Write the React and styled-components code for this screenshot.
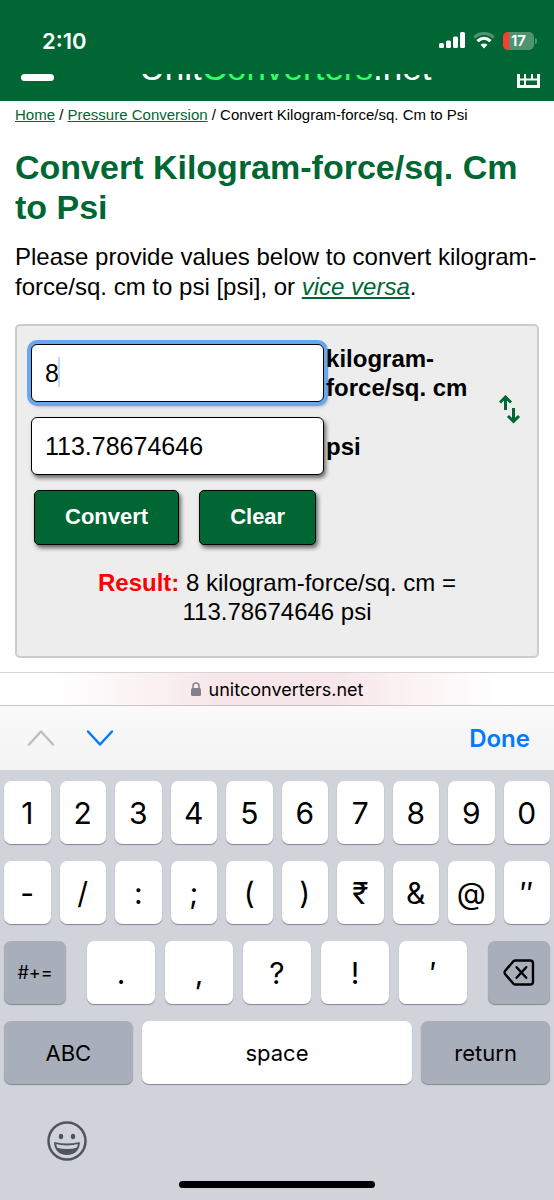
import React, { useState } from 'react';
import styled, { createGlobalStyle } from 'styled-components';

const NUMBER_KEYS = ['1', '2', '3', '4', '5', '6', '7', '8', '9', '0'];
const SYMBOL_KEYS = ['-', '/', ':', ';', '(', ')', '₹', '&', '@', '″'];
const PUNCTUATION_KEYS = ['.', ',', '?', '!', '′'];

const StatusBar = () => (
  <StStatusBar>
    <Time>2:10</Time>
    <StatusIcons>
      <svg width="26" height="17" viewBox="0 0 26 17" fill="#fff" aria-label="Signal">
        <rect x="0" y="11" width="5" height="5" rx="1.5" />
        <rect x="7" y="8.5" width="5" height="7.5" rx="1.5" />
        <rect x="14" y="4.5" width="5" height="11.5" rx="1.5" />
        <rect x="21" y="0" width="5" height="16" rx="1.5" />
      </svg>
      <svg width="22" height="17" viewBox="0 0 22 17" fill="none" aria-label="Wi-Fi">
        <path d="M1.2 5.6C6.8 0.2 15.2 0.2 20.8 5.6" stroke="#4d946f" strokeWidth="3" />
        <path d="M4.5 9.2C8.5 5.4 13.5 5.4 17.5 9.2" stroke="#fff" strokeWidth="3.2" />
        <path d="M11 16.5L7.5 12.8C9.5 11 12.5 11 14.5 12.8Z" fill="#fff" />
      </svg>
      <Battery>
        <BatteryBody>17</BatteryBody>
        <BatteryNub />
      </Battery>
    </StatusIcons>
  </StStatusBar>
);

const SiteHeader = () => (
  <StSiteHeader>
    <MenuButton aria-label="Menu">
      <MenuLine />
    </MenuButton>
    <Logo href="#home">
      Unit<span>Converters</span>.net
    </Logo>
    <CalculatorLink href="#calculators" aria-label="All converters">
      <svg width="23" height="28" viewBox="0 0 23 28" fill="none" stroke="#fff" strokeWidth="3">
        <rect x="1.5" y="1.5" width="20" height="25" />
        <path d="M1 10H22M1 19.5H22" strokeWidth="2" />
        <path d="M8 10V27M15 10V19" strokeWidth="2" />
      </svg>
    </CalculatorLink>
  </StSiteHeader>
);

const Converter = () => {
  const [from, setFrom] = useState('8');
  const [to, setTo] = useState('113.78674646');

  const onClear = () => {
    setFrom('');
    setTo('');
  };

  return (
    <Card onSubmit={(e) => e.preventDefault()}>
      <Fields>
        <InputWrap>
          <ValueInput id="from" $active value={from} onChange={(e) => setFrom(e.target.value)} />
          <Caret />
        </InputWrap>
        <UnitLabel htmlFor="from">kilogram-force/sq. cm</UnitLabel>
        <SwapButton type="button" aria-label="Swap units">
          <svg width="22" height="30" viewBox="0 0 22 30" fill="none" stroke="#006633" strokeWidth="3">
            <path d="M6.5 15V2M1 7.5L6.5 2L12 7.5" />
            <path d="M14.5 13V27M9 21L14.5 26.5L20 21" />
          </svg>
        </SwapButton>
        <InputWrap>
          <ValueInput id="to" value={to} onChange={(e) => setTo(e.target.value)} />
        </InputWrap>
        <UnitLabel htmlFor="to">psi</UnitLabel>
      </Fields>
      <Actions>
        <ActionButton type="submit">Convert</ActionButton>
        <ActionButton type="button" onClick={onClear}>Clear</ActionButton>
      </Actions>
      <Result>
        <strong>Result:</strong> 8 kilogram-force/sq. cm = 113.78674646 psi
      </Result>
    </Card>
  );
};

const Keyboard = () => (
  <StKeyboard>
    <KeyRow>
      {NUMBER_KEYS.map((key) => (
        <Key key={key}>{key}</Key>
      ))}
    </KeyRow>
    <KeyRow>
      {SYMBOL_KEYS.map((key) => (
        <Key key={key}>{key}</Key>
      ))}
    </KeyRow>
    <PunctuationRow>
      <Key $dark $size={18}>#+=</Key>
      <PunctuationKeys>
        {PUNCTUATION_KEYS.map((key) => (
          <Key key={key}>{key}</Key>
        ))}
      </PunctuationKeys>
      <Key $dark aria-label="Delete">
        <svg width="32" height="27" viewBox="0 0 33 28" fill="none" stroke="#000" strokeWidth="2.5" strokeLinecap="round" strokeLinejoin="round">
          <path d="M13 1.5H28Q31 1.5 31 4.5V23.5Q31 26.5 28 26.5H13Q11.5 26.5 10.5 25.5L2 15.5Q1 14 2 12.5L10.5 2.5Q11.5 1.5 13 1.5Z" />
          <path d="M14 8.5L24 19.5M24 8.5L14 19.5" />
        </svg>
      </Key>
    </PunctuationRow>
    <SpaceRow>
      <Key $dark $size={22}>ABC</Key>
      <Key $size={22}>space</Key>
      <Key $dark $size={22}>return</Key>
    </SpaceRow>
    <KeyboardFooter>
      <EmojiButton aria-label="Emoji">
        <svg width="40" height="40" viewBox="0 0 40 40" fill="none">
          <circle cx="20" cy="20" r="18.5" stroke="#50555c" strokeWidth="2.5" />
          <ellipse cx="14" cy="15.5" rx="2.2" ry="2.8" fill="#50555c" />
          <ellipse cx="26" cy="15.5" rx="2.2" ry="2.8" fill="#50555c" />
          <path d="M8 22Q20 25 32 22Q31 33 20 33Q9 33 8 22Z" stroke="#50555c" strokeWidth="1.8" strokeLinejoin="round" />
          <path d="M9.5 26.5Q20 29.5 30.5 26.5Q28 33 20 33Q12 33 9.5 26.5Z" fill="#50555c" />
        </svg>
      </EmojiButton>
    </KeyboardFooter>
    <HomeIndicator />
  </StKeyboard>
);

const App = () => {
  return (
    <Screen>
      <GlobalStyle />
      <StatusBar />
      <SiteHeader />
      <Content>
        <Breadcrumb>
          <a href="#home">Home</a> / <a href="#pressure">Pressure Conversion</a> / Convert Kilogram-force/sq. Cm to Psi
        </Breadcrumb>
        <Heading>Convert Kilogram-force/sq. Cm to Psi</Heading>
        <Intro>
          Please provide values below to convert kilogram-force/sq. cm to psi [psi], or <a href="#reverse">vice versa</a>.
        </Intro>
        <Converter />
      </Content>
      <AddressBar>
        <svg width="10" height="14" viewBox="0 0 10 14" fill="none" aria-hidden="true">
          <rect x="0" y="6" width="10" height="8" rx="1.5" fill="#85818a" />
          <path d="M2 7V4Q2 1 5 1Q8 1 8 4V7" stroke="#85818a" strokeWidth="1.5" />
        </svg>
        unitconverters.net
      </AddressBar>
      <InputToolbar>
        <StepButton aria-label="Previous field" $muted>
          <svg width="28" height="18" viewBox="0 0 28 18">
            <path d="M2 15.5L14 2.5L26 15.5" />
          </svg>
        </StepButton>
        <StepButton aria-label="Next field">
          <svg width="28" height="18" viewBox="0 0 28 18">
            <path d="M2 2.5L14 15.5L26 2.5" />
          </svg>
        </StepButton>
        <DoneButton>Done</DoneButton>
      </InputToolbar>
      <Keyboard />
    </Screen>
  );
};

export default App;

const GlobalStyle = createGlobalStyle`
  * {
    box-sizing: border-box;
  }
  body {
    margin: 0;
    background: #fff;
    color: #000;
    font-family: "Liberation Sans", Arial, sans-serif;
  }
  button {
    margin: 0;
    padding: 0;
    border: 0;
    background: none;
    color: inherit;
    font-family: inherit;
  }
  svg {
    display: block;
  }
`;

const Screen = styled.div`
  display: flex;
  flex-direction: column;
  min-height: 100vh;
`;

const StStatusBar = styled.header`
  display: flex;
  align-items: center;
  justify-content: space-between;
  height: 74px;
  padding: 7px 17px 0 42px;
  background: #006633;
  color: #fff;
  font-family: Inter, sans-serif;
`;

const Time = styled.div`
  font-size: 22px;
  font-weight: 600;
`;

const StatusIcons = styled.div`
  display: flex;
  align-items: center;
  gap: 8px;
`;

const Battery = styled.div`
  display: flex;
  align-items: center;
  gap: 1px;
`;

const BatteryBody = styled.div`
  width: 31px;
  height: 18px;
  border-radius: 5px;
  background: linear-gradient(to right, #ff3b30 6px, #4d946f 6px);
  font-size: 15px;
  font-weight: 600;
  line-height: 18px;
  text-align: center;
`;

const BatteryNub = styled.div`
  width: 2px;
  height: 6px;
  border-radius: 0 2px 2px 0;
  background: #4d946f;
`;

/* scrolled up under the status bar, so only the lower part shows */
const StSiteHeader = styled.div`
  display: flex;
  align-items: flex-end;
  justify-content: space-between;
  height: 27px;
  padding: 0 14px 13px 21px;
  overflow: hidden;
  background: #006633;
`;

const MenuButton = styled.button`
  padding-bottom: 7px;
`;

const MenuLine = styled.span`
  display: block;
  width: 33px;
  height: 7px;
  border-radius: 4px;
  background: #fff;
`;

const Logo = styled.a`
  color: #fff;
  font-size: 35px;
  line-height: 40px;
  text-decoration: none;
  span {
    color: #33ff66;
  }
`;

const CalculatorLink = styled.a`
  display: block;
`;

const Content = styled.main`
  flex: 1;
  padding: 4px 15px 14px;
`;

const Breadcrumb = styled.nav`
  font-size: 15px;
  line-height: 20px;
  a {
    color: #006633;
  }
`;

const Heading = styled.h1`
  margin: 22px 0 15px;
  color: #006633;
  font-size: 34px;
  line-height: 40px;
`;

const Intro = styled.p`
  margin: 0 0 22px;
  font-size: 24px;
  line-height: 30px;
  a {
    color: #006633;
    font-style: italic;
  }
`;

const Card = styled.form`
  padding: 18px 14px 30px;
  border: 2px solid #ccc;
  border-radius: 5px;
  background: #ededed;
`;

const Fields = styled.div`
  display: grid;
  grid-template-columns: minmax(0, 12fr) minmax(0, 7fr) 24px;
  gap: 15px 2px;
  align-items: center;
`;

const InputWrap = styled.div`
  position: relative;
  grid-column: 1;
`;

const ValueInput = styled.input`
  display: block;
  width: 100%;
  height: 58px;
  padding: 0 13px;
  border: 1px solid #000;
  border-radius: 6px;
  outline: none;
  background: #fff;
  color: #000;
  font-family: inherit;
  font-size: 25px;
  box-shadow: ${(props) => (props.$active ? '0 0 0 4px #6aa6ef, ' : '')}2px 3px 4px #666;
`;

const Caret = styled.span`
  position: absolute;
  top: 13px;
  left: 27px;
  width: 2px;
  height: 30px;
  background: #bcd9fb;
`;

const UnitLabel = styled.label`
  z-index: 1;
  font-size: 24px;
  font-weight: 700;
  line-height: 29px;
`;

const SwapButton = styled.button`
  grid-column: 3;
  grid-row: 1 / span 2;
  justify-self: start;
`;

const Actions = styled.div`
  display: flex;
  gap: 20px;
  padding: 15px 3px 0;
`;

const ActionButton = styled.button`
  height: 55px;
  padding: 0 30px 2px;
  border: 1px solid #000;
  border-radius: 5px;
  background: #006633;
  color: #fff;
  font-size: 22px;
  font-weight: 700;
  box-shadow: 2px 3px 4px #666;
`;

const Result = styled.p`
  max-width: 400px;
  margin: 23px auto 0;
  font-size: 24px;
  line-height: 29px;
  text-align: center;
  strong {
    color: #f00;
  }
`;

const AddressBar = styled.div`
  display: flex;
  align-items: center;
  justify-content: center;
  gap: 8px;
  height: 33px;
  border-top: 1px solid #d5d3d4;
  background: linear-gradient(to right, #fff 10%, #f7e6e9 40%, #f7e6e9 60%, #fff 90%);
  font-family: Inter, sans-serif;
  font-size: 18px;
`;

const InputToolbar = styled.div`
  display: flex;
  align-items: center;
  gap: 31px;
  height: 65px;
  padding: 0 24px 0 27px;
  border-top: 1px solid #c6c4c5;
  background: linear-gradient(#fafafa, #f4f3f4);
  font-family: Inter, sans-serif;
`;

const StepButton = styled.button`
  path {
    fill: none;
    stroke: ${(props) => (props.$muted ? '#bebebf' : '#007aff')};
    stroke-width: 2.5;
    stroke-linecap: round;
    stroke-linejoin: round;
  }
`;

const DoneButton = styled.button`
  margin-left: auto;
  color: #007aff;
  font-size: 24px;
  font-weight: 600;
`;

const StKeyboard = styled.div`
  display: flex;
  flex-direction: column;
  gap: 17px;
  padding: 11px 4px 12px;
  background: #d0d3da;
  font-family: Inter, "Noto Sans", sans-serif;
`;

const KeyRow = styled.div`
  display: grid;
  grid-template-columns: repeat(10, minmax(0, 1fr));
  gap: 9px;
`;

const PunctuationRow = styled.div`
  display: grid;
  grid-template-columns: 62px minmax(0, 1fr) 62px;
  gap: 21px;
`;

const PunctuationKeys = styled.div`
  display: grid;
  grid-template-columns: repeat(5, minmax(0, 1fr));
  gap: 10px;
`;

const SpaceRow = styled.div`
  display: grid;
  grid-template-columns: minmax(0, 10fr) minmax(0, 21fr) minmax(0, 10fr);
  gap: 9px;
`;

const Key = styled.button`
  display: flex;
  align-items: center;
  justify-content: center;
  height: 63px;
  border-radius: 7px;
  background: ${(props) => (props.$dark ? '#a9afba' : '#fff')};
  font-size: ${(props) => props.$size || 30}px;
  box-shadow: 0 1px 1px #85878c;
`;

const KeyboardFooter = styled.div`
  padding: 20px 43px 3px;
`;

const EmojiButton = styled.button`
  display: block;
`;

const HomeIndicator = styled.div`
  width: 36%;
  height: 7px;
  margin: 0 auto;
  border-radius: 4px;
  background: #000;
`;
